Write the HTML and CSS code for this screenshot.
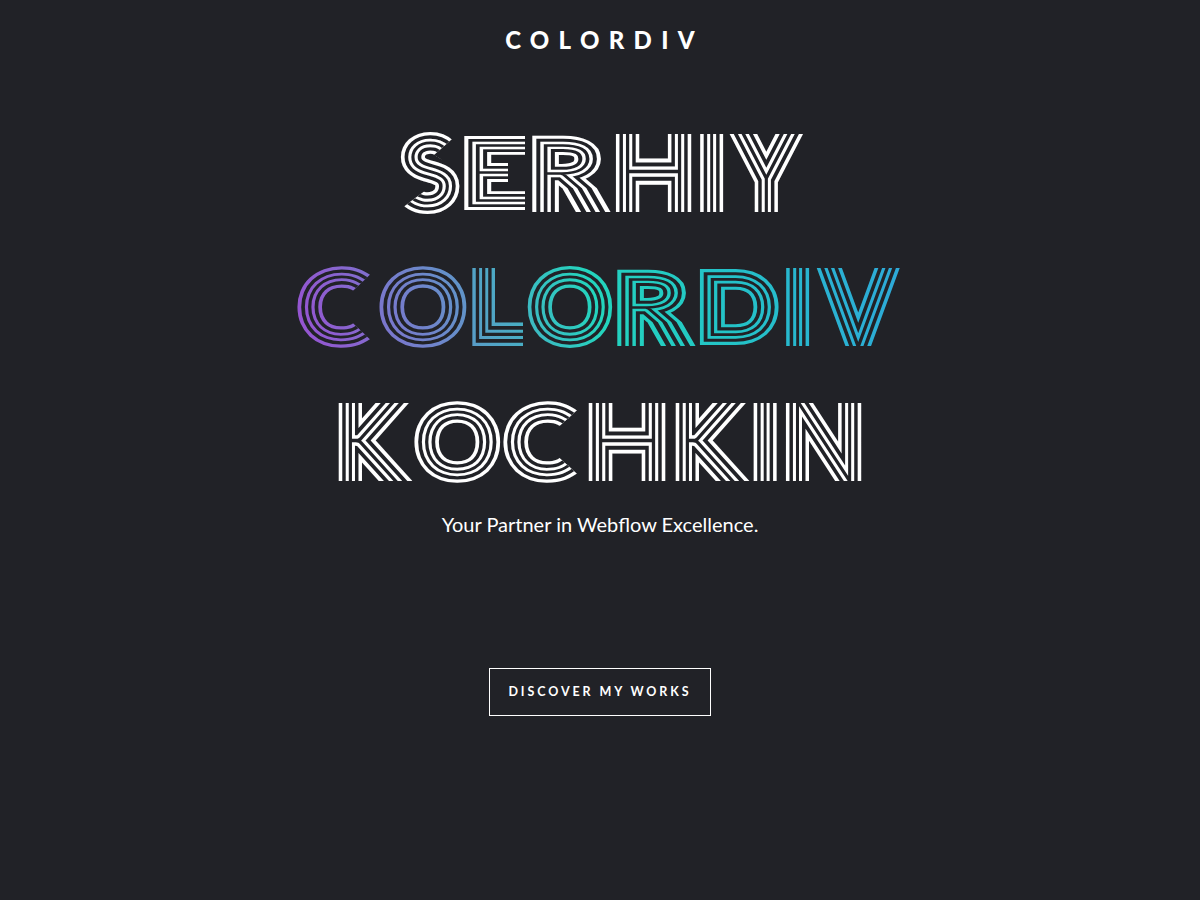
FILE: index.html
```html
<!DOCTYPE html>
<html lang="en">
<head>
    <meta charset="UTF-8">
    <title>Colordiv - Serhiy Kochkin</title>
    <link rel="stylesheet" href="styles.css">
</head>
<body>
    <header class="brand">COLORDIV</header>

    <main class="hero">
        <h1 class="title">
            <svg class="title-art" width="640" height="370" viewBox="280 125 640 370">
                <defs>
                    <linearGradient id="inkGrad" gradientUnits="userSpaceOnUse" x1="300" y1="390" x2="900" y2="230">
                        <stop offset="0" stop-color="#9c4cd2"></stop>
                        <stop offset="0.22" stop-color="#6e86cb"></stop>
                        <stop offset="0.48" stop-color="#23d5bd"></stop>
                        <stop offset="0.7" stop-color="#24c2c8"></stop>
                        <stop offset="1" stop-color="#30a4dc"></stop>
                    </linearGradient>

                    <!-- first word -->
                    <clipPath id="a1"><polygon points="392,125 468,125 434,155 462,172 462,220 386,220 426,190 392,170"></polygon></clipPath>
                    <clipPath id="a2"><polygon points="462,125 525,125 525,160 508,160 508,186 525,186 525,220 462,220"></polygon></clipPath>
                    <clipPath id="a3"><rect x="529" y="125" width="82" height="63"></rect></clipPath>
                    <clipPath id="a3b"><rect x="529" y="188" width="82" height="24"></rect></clipPath>
                    <clipPath id="a4"><rect x="611" y="134" width="85" height="78"></rect></clipPath>
                    <clipPath id="a5"><rect x="696" y="134" width="30" height="78"></rect></clipPath>
                    <clipPath id="a6"><rect x="726" y="134" width="85" height="78"></rect></clipPath>

                    <!-- second word -->
                    <clipPath id="b1"><polygon points="290,250 378,250 378,267 336,307 378,347 378,360 290,360"></polygon></clipPath>
                    <clipPath id="b2"><rect x="378" y="255" width="90.500" height="105"></rect></clipPath>
                    <clipPath id="b3"><rect x="468.500" y="268" width="54.500" height="78"></rect></clipPath>
                    <clipPath id="b4"><rect x="525.500" y="255" width="89.500" height="105"></rect></clipPath>
                    <clipPath id="b5"><rect x="615" y="255" width="81" height="67"></rect></clipPath>
                    <clipPath id="b5b"><rect x="615" y="322" width="81" height="24"></rect></clipPath>
                    <clipPath id="b6"><rect x="696" y="255" width="86" height="105"></rect></clipPath>
                    <clipPath id="b7"><rect x="782" y="268" width="30" height="78"></rect></clipPath>
                    <clipPath id="b8"><rect x="812" y="268" width="95" height="78"></rect></clipPath>

                    <!-- third word -->
                    <clipPath id="c1"><rect x="330" y="403" width="82.500" height="78"></rect></clipPath>
                    <clipPath id="c2"><rect x="412.500" y="390" width="89.500" height="105"></rect></clipPath>
                    <clipPath id="c3"><polygon points="502,385 585,385 585,403 542,442 585,481 585,500 502,500"></polygon></clipPath>
                    <clipPath id="c4"><rect x="585" y="403" width="85" height="78"></rect></clipPath>
                    <clipPath id="c5"><rect x="670" y="403" width="80" height="78"></rect></clipPath>
                    <clipPath id="c6"><rect x="750" y="403" width="31" height="78"></rect></clipPath>
                    <clipPath id="c7"><rect x="781" y="403" width="85" height="78"></rect></clipPath>
                </defs>

                <g class="word">
                    <g class="word-text"><text id="t1" x="405 468 536 618 702.5 740" y="199">SERHIY</text></g>
                    <g class="ring ring-1">
                        <g id="w1">
                            <g clip-path="url(#a1)"><use href="#t1" transform="matrix(1.258 0 0 1.148 -105.5 -25.6)"></use></g>
                            <g clip-path="url(#a2)"><use href="#t1" transform="matrix(1.531 0 0 1.077 -252.8 -13.32)"></use></g>
                            <g clip-path="url(#a3)"><use href="#t1" transform="matrix(1.486 0 0 1.077 -264.4 -13.32)"></use></g>
                            <g clip-path="url(#a3b)"><use class="k-leg" href="#t1" transform="matrix(1 0 0 2 0 -188) matrix(1.486 0 0 1.077 -264.4 -13.32)"></use></g>
                            <g clip-path="url(#a4)"><use class="k-h" href="#t1" transform="matrix(1.375 0 0 1.55 -234.75 -95.15)"></use></g>
                            <g clip-path="url(#a5)"><use class="k-i" href="#t1" transform="matrix(1 0 0 1.55 0 -95.15)"></use></g>
                            <g clip-path="url(#a6)"><use class="k-y" href="#t1" transform="matrix(1.244 0 0 1.55 -180.8 -95.15)"></use></g>
                        </g>
                    </g>
                    <use class="ring ring-2" href="#w1"></use>
                    <use class="ring ring-3" href="#w1"></use>
                    <use class="ring ring-4" href="#w1"></use>
                </g>

                <g class="word word-grad">
                    <g class="word-text"><text id="t2" x="304 386 474 534 621 703 788.5 826" y="333">COLORDIV</text></g>
                    <g class="ring ring-1">
                        <g id="w2">
                            <g clip-path="url(#b1)"><use href="#t2" transform="matrix(1.3 0 0 1.148 -92.7 -45.44)"></use></g>
                            <g clip-path="url(#b2)"><use href="#t2" transform="matrix(1.306 0 0 1.148 -119.6 -45.44)"></use></g>
                            <g clip-path="url(#b3)"><use href="#t2" transform="matrix(1.414 0 0 1.5 -199.5 -164.5)"></use></g>
                            <g clip-path="url(#b4)"><use href="#t2" transform="matrix(1.265 0 0 1.148 -142.8 -45.44)"></use></g>
                            <g clip-path="url(#b5)"><use href="#t2" transform="matrix(1.486 0 0 1.077 -305.7 -23.64)"></use></g>
                            <g clip-path="url(#b5b)"><use class="k-leg" href="#t2" transform="matrix(1 0 0 2 0 -322) matrix(1.486 0 0 1.077 -305.7 -23.64)"></use></g>
                            <g clip-path="url(#b6)"><use href="#t2" transform="matrix(1.273 0 0 1.077 -194.1 -23.64)"></use></g>
                            <g clip-path="url(#b7)"><use class="k-i" href="#t2" transform="matrix(1 0 0 1.55 0 -168.85)"></use></g>
                            <g clip-path="url(#b8)"><use class="k-h" href="#t2" transform="matrix(1.37 0 0 1.55 -306 -168.85)"></use></g>
                        </g>
                    </g>
                    <use class="ring ring-2" href="#w2"></use>
                    <use class="ring ring-3" href="#w2"></use>
                    <use class="ring ring-4" href="#w2"></use>
                </g>

                <g class="word">
                    <g class="word-text"><text id="t3" x="341 421 510 591 678 756 788" y="468">KOCHKIN</text></g>
                    <g class="ring ring-1">
                        <g id="w3">
                            <g clip-path="url(#c1)"><use class="k-k" href="#t3" transform="matrix(1.324 0 0 1.55 -113.1 -243.1)"></use></g>
                            <g clip-path="url(#c2)"><use href="#t3" transform="matrix(1.286 0 0 1.148 -121.8 -65.42)"></use></g>
                            <g clip-path="url(#c3)"><use href="#t3" transform="matrix(1.3 0 0 1.148 -154.5 -65.42)"></use></g>
                            <g clip-path="url(#c4)"><use class="k-h" href="#t3" transform="matrix(1.4 0 0 1.55 -239.6 -243.1)"></use></g>
                            <g clip-path="url(#c5)"><use class="k-k" href="#t3" transform="matrix(1.324 0 0 1.55 -222.3 -243.1)"></use></g>
                            <g clip-path="url(#c6)"><use class="k-i" href="#t3" transform="matrix(1 0 0 1.55 0 -243.1)"></use></g>
                            <g clip-path="url(#c7)"><use class="k-h" href="#t3" transform="matrix(1.375 0 0 1.55 -298.5 -243.1)"></use></g>
                        </g>
                    </g>
                    <use class="ring ring-2" href="#w3"></use>
                    <use class="ring ring-3" href="#w3"></use>
                    <use class="ring ring-4" href="#w3"></use>
                </g>
            </svg>
        </h1>

        <p class="tagline">Your Partner in Webflow Excellence.</p>

        <a href="#works" class="cta">DISCOVER MY WORKS</a>
    </main>
</body>
</html>
```
FILE: styles.css
```css
* {
    margin: 0;
    padding: 0;
    box-sizing: border-box;
}

body {
    font-family: 'Lato', 'Liberation Sans', sans-serif;
    background: #212227;
    color: white;
    min-height: 100vh;
    display: flex;
    flex-direction: column;
    align-items: center;
}

.brand {
    margin-top: 25px;
    padding-left: 9px;
    font-size: 24px;
    line-height: 30px;
    font-weight: 900;
    letter-spacing: 9.3px;
}

.hero {
    display: flex;
    flex-direction: column;
    align-items: center;
}

.title {
    margin-top: 70px;
    line-height: 0;
}

.title-art {
    display: block;
}

.title-art text {
    font-family: 'Lato', sans-serif;
    font-size: 75px;
    font-weight: 100;
    vector-effect: non-scaling-stroke;
    stroke-width: calc(var(--w, 0) * var(--k, 1) * 1px);
}

.word {
    --ink: #ffffff;
}

.word-grad {
    --ink: url(#inkGrad);
}

.word-text {
    fill: none;
    stroke: none;
}

.ring {
    stroke-linejoin: miter;
    stroke-miterlimit: 4;
}

.ring-1,
.ring-3 {
    fill: var(--ink);
    stroke: var(--ink);
}

.ring-2,
.ring-4 {
    fill: #212227;
    stroke: #212227;
}

.ring-1 {
    --w: 22;
}

.ring-2 {
    --w: 15;
}

.ring-3 {
    --w: 8;
}

.ring-4 {
    --w: 2;
}

.k-h {
    --k: 1.066;
}

.k-i {
    --k: 1.304;
}

.k-y {
    --k: 1.13;
}

.k-k {
    --k: 1.089;
}

.k-leg {
    --k: 1.426;
}

.tagline {
    margin-top: 14px;
    font-size: 20px;
    line-height: 30px;
}

.cta {
    margin-top: 129px;
    display: block;
    width: 222px;
    height: 48px;
    border: 1px solid white;
    color: white;
    text-align: center;
    text-decoration: none;
    font-size: 12.5px;
    line-height: 46px;
    font-weight: 700;
    letter-spacing: 2.9px;
}
```
